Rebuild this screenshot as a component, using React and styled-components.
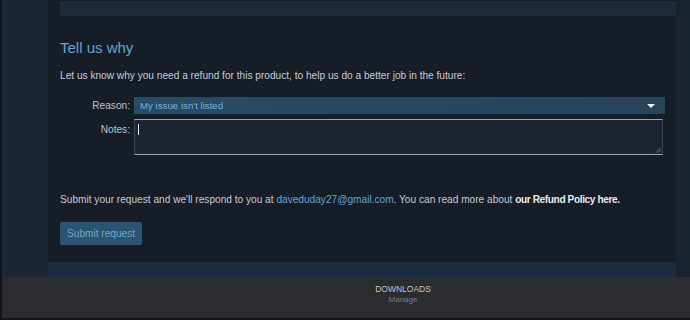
import React from 'react'
import styled, { createGlobalStyle } from 'styled-components'

const GlobalStyle = createGlobalStyle`
  html, body {
    margin: 0;
    padding: 0;
    background: #1b2636;
  }
  body {
    font-family: "Liberation Sans", Arial, sans-serif;
  }
`

function App() {
  return (
    <>
      <GlobalStyle />
      <Frame>
        <Main>
          <Gutter />
          <Panel>
            <TopBox />
            <Content>
              <Heading>Tell us why</Heading>
              <Para>
                Let us know why you need a refund for this product, to help us do a better job in the future:
              </Para>

              <Form>
                <Label>Reason:</Label>
                <Select>
                  <span>My issue isn't listed</span>
                  <Arrow />
                </Select>

                <Label $top>Notes:</Label>
                <Notes>
                  <Caret />
                  <Grip viewBox="0 0 6 6">
                    <path d="M1 5.5 L5.5 1 M3.5 5.5 L5.5 3.5" stroke="#7d8894" strokeWidth="0.8" />
                  </Grip>
                </Notes>
              </Form>

              <Para $spaced>
                Submit your request and we'll respond to you at <Email>daveduday27@gmail.com</Email>. You can read
                more about <Strong>our Refund Policy here.</Strong>
              </Para>

              <SubmitButton>Submit request</SubmitButton>
            </Content>
          </Panel>
          <Gutter $right />
        </Main>

        <Footer>
          <FooterTitle>DOWNLOADS</FooterTitle>
          <FooterSub>Manage</FooterSub>
        </Footer>
      </Frame>
    </>
  )
}

export default App

const Frame = styled.div`
    width: 690px;
    height: 320px;
    display: flex;
    flex-direction: column;
    box-sizing: border-box;
    border-left: 2px solid #0f141b;
    border-bottom: 2px solid #121418;
    overflow: hidden;
`

const Main = styled.div`
    flex: 1;
    display: flex;
    background: linear-gradient(to bottom, #1b2636 0%, #1b2636 78%, #1c2c42 100%);
`

const Gutter = styled.div`
    width: ${p => (p.$right ? '14px' : '46px')};
    flex-shrink: 0;
    background: ${p => (p.$right ? '#19222f' : '#1b2737')};
`

const Panel = styled.div`
    flex: 1;
    background: #171d27;
    margin-bottom: 15px;
    padding: 0 0 0 12px;
    display: flex;
    flex-direction: column;
`

const TopBox = styled.div`
    height: 15px;
    background: #1e2a3a;
    border-top: 1px solid #141a22;
`

const Content = styled.div`
    padding: 23px 11px 0 0;
    display: flex;
    flex-direction: column;
    align-items: flex-start;
`

const Heading = styled.h2`
    margin: 0;
    font-size: 15px;
    line-height: 18px;
    font-weight: normal;
    color: #68a3cc;
`

const Para = styled.p`
    margin: ${p => (p.$spaced ? '38px 0 0' : '12px 0 0')};
    font-size: 10.15px;
    line-height: 14px;
    color: #c3ccd5;
`

const Email = styled.span`
    color: #62a6d6;
`

const Strong = styled.span`
    color: #e6ebef;
    font-weight: bold;
    letter-spacing: -0.4px;
`

const Form = styled.div`
    margin-top: 14px;
    display: grid;
    grid-template-columns: 70px 1fr;
    column-gap: 4px;
    row-gap: 5px;
    width: 100%;
`

const Label = styled.div`
    text-align: right;
    font-size: 10.15px;
    color: #b9c3cc;
    line-height: ${p => (p.$top ? '14px' : '17px')};
    padding-top: ${p => (p.$top ? '4px' : '0')};
`

const Select = styled.div`
    height: 17px;
    display: flex;
    align-items: center;
    justify-content: space-between;
    padding: 0 10px 0 6px;
    background: linear-gradient(to right, #294b65, #27445c);
    font-size: 9.7px;
    color: #6fb2df;
`

const Arrow = styled.div`
    width: 0;
    height: 0;
    border-left: 4px solid transparent;
    border-right: 4px solid transparent;
    border-top: 4px solid #eef2f5;
`

const Notes = styled.div`
    position: relative;
    height: 34px;
    margin-right: 2px;
    background: #1d2533;
    border: 1px solid #3c4654;
    border-top-color: #9aa4ae;
    border-bottom-color: #9aa4ae;
`

const Caret = styled.div`
    position: absolute;
    left: 3px;
    top: 4px;
    width: 1px;
    height: 11px;
    background: #dfe5ea;
`

const Grip = styled.svg`
    position: absolute;
    right: 1px;
    bottom: 1px;
    width: 6px;
    height: 6px;
`

const SubmitButton = styled.button`
    margin-top: 15px;
    height: 23px;
    padding: 0 7px;
    border: none;
    border-radius: 2px;
    background: #2a5471;
    color: #6fa7cf;
    font-family: inherit;
    font-size: 10.15px;
`

const Footer = styled.div`
    height: 41px;
    background: #2a2c30;
    display: flex;
    flex-direction: column;
    align-items: center;
    padding-top: 7px;
    box-sizing: border-box;
    padding-left: 114px;
`

const FooterTitle = styled.div`
    font-size: 8.5px;
    line-height: 11px;
    color: #c3c6ca;
`

const FooterSub = styled.div`
    font-size: 8px;
    line-height: 10px;
    color: #7b7f84;
`
